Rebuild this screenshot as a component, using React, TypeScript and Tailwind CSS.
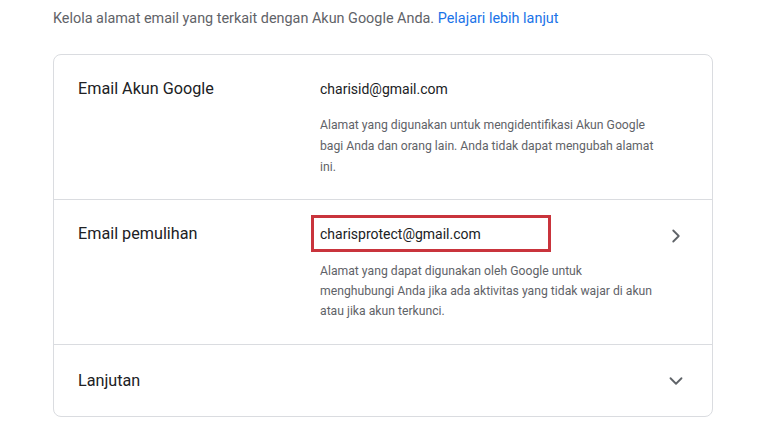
import { ChevronRight, ChevronDown } from "lucide-react";

const font = "font-['Roboto','Liberation_Sans',sans-serif]";

export default function App() {
  return (
    <div className={`${font} w-[768px] h-[432px] overflow-hidden bg-white`}>
      <p className="pl-[53px] pt-[9px] text-[14.4px] leading-[20px] text-[#5f6368]">
        Kelola alamat email yang terkait dengan Akun Google Anda.{" "}
        <span className="text-[#1a73e8]">Pelajari lebih lanjut</span>
      </p>

      <div className="ml-[53px] mt-[25px] w-[660px] rounded-[8px] border border-[#dadce0]">
        {/* Email Akun Google */}
        <div className="flex border-b border-[#dadce0] pl-[24px] pt-[22px] pb-[21px]">
          <div className="w-[242px] shrink-0 text-[16.2px] leading-[24px] text-[#202124]">
            Email Akun Google
          </div>
          <div className="w-[340px] pt-[2px]">
            <div className="text-[14px] leading-[20px] text-[#202124]">charisid@gmail.com</div>
            <p className="mt-[16px] text-[12.2px] leading-[21px] text-[#5f6368]">
              Alamat yang digunakan untuk mengidentifikasi Akun Google bagi Anda dan orang lain. Anda tidak dapat mengubah alamat ini.
            </p>
          </div>
        </div>

        {/* Email pemulihan */}
        <div className="flex border-b border-[#dadce0] pl-[24px] pt-[22px] pb-[23px]">
          <div className="w-[242px] shrink-0 text-[16.2px] leading-[24px] text-[#202124]">
            Email pemulihan
          </div>
          <div className="w-[345px] pt-[2px]">
            <div className="relative text-[14px] leading-[20px] text-[#202124]">
              charisprotect@gmail.com
              <span className="absolute left-[-9px] top-[-9px] h-[37px] w-[240px] border-[3px] border-[#c9343c]" />
            </div>
            <p className="mt-[17px] text-[12.2px] leading-[20px] text-[#5f6368]">
              Alamat yang dapat digunakan oleh Google untuk
              <br />
              menghubungi Anda jika ada aktivitas yang tidak wajar di akun atau jika akun terkunci.
            </p>
          </div>
          <div className="ml-auto mr-[25px] mt-[3px]">
            <ChevronRight className="h-[22px] w-[22px] text-[#5f6368]" strokeWidth={2} />
          </div>
        </div>

        {/* Lanjutan */}
        <div className="flex items-center h-[71px] pl-[24px] pr-[25px]">
          <div className="text-[16.2px] leading-[24px] text-[#202124]">Lanjutan</div>
          <ChevronDown className="ml-auto h-[22px] w-[22px] text-[#5f6368]" strokeWidth={2} />
        </div>
      </div>
    </div>
  );
}
